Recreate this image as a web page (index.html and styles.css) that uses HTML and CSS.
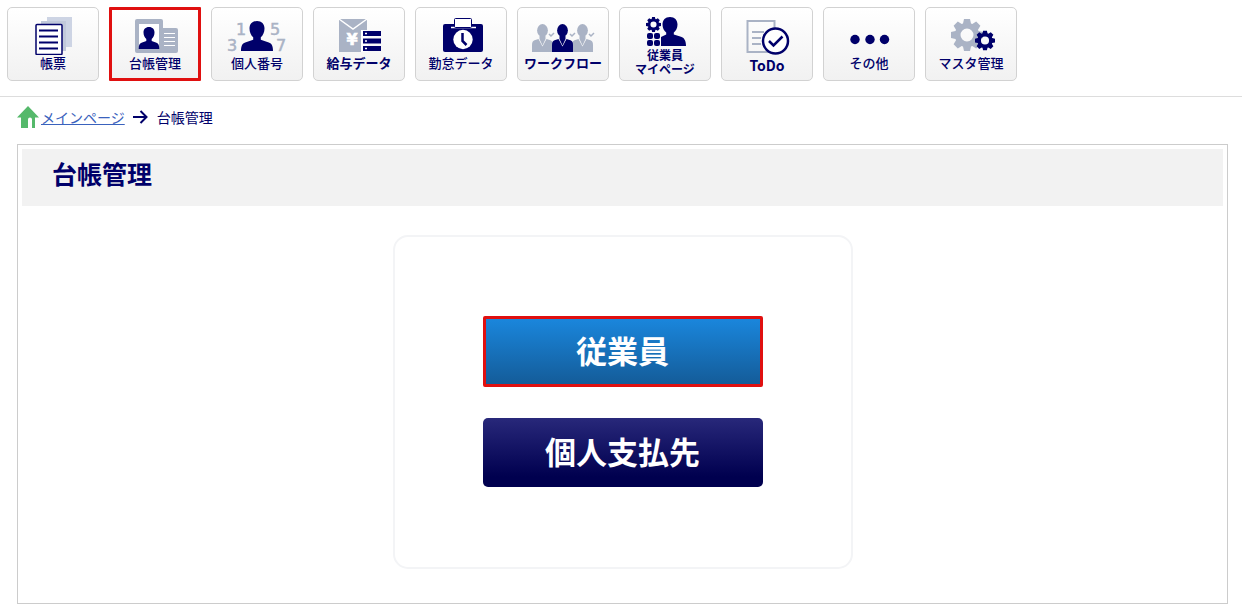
FILE: index.html
```html
<!DOCTYPE html>
<html lang="ja">
<head>
    <meta charset="UTF-8">
    <meta name="viewport" content="width=device-width, initial-scale=1.0">
    <title>台帳管理</title>
    <link rel="stylesheet" href="styles.css">
</head>
<body>
    <!-- shared shapes -->
    <svg class="defs" width="0" height="0" aria-hidden="true">
        <symbol id="gear" viewBox="-16 -16 32 32">
            <path fill-rule="evenodd" d="M-3 -16H3L4 -11.500L5.300 -11L9.200 -13.400L13.400 -9.200L11 -5.300L11.500 -4L16 -3V3L11.500 4L11 5.300L13.400 9.200L9.200 13.400L5.300 11L4 11.500L3 16H-3L-4 11.500L-5.300 11L-9.200 13.400L-13.400 9.200L-11 5.300L-11.500 4L-16 3V-3L-11.500 -4L-11 -5.300L-13.400 -9.200L-9.200 -13.400L-5.300 -11L-4 -11.500ZM-6.500 0a6.500 6.500 0 1 0 13 0a6.500 6.500 0 1 0 -13 0Z"/>
        </symbol>
        <symbol id="person" viewBox="0 0 32 30">
            <path d="M16 0c4.600 0 7.500 3 7.500 7.500c0 3.600-1.500 7-3.700 8.700v2.600l8 2.600c3 1 4.200 3.600 4.200 8.600H0c0-5 1.200-7.600 4.200-8.600l8-2.600v-2.600C10 14.500 8.500 11.100 8.500 7.500C8.500 3 11.400 0 16 0Z"/>
        </symbol>
        <symbol id="worker" viewBox="0 0 21 28">
            <ellipse cx="10.500" cy="6.500" rx="5.400" ry="6.500"/>
            <path d="M7.500 12h6v3l-3 6.500l-3-6.500Z"/>
            <path d="M6.500 15l4 7.500l4-7.500l4 1.200c2 .8 2.500 2.500 2.500 5V28H0v-6.800c0-2.500 .5-4.200 2.500-5Z"/>
        </symbol>
    </svg>

    <nav class="menu">
        <a class="menu-item" href="#">
            <svg viewBox="0 0 90 47">
                <path class="pale" d="M39 9h25v30h-7V16H39Z"/>
                <path class="mid" d="M33 13h25v30h-4V16H33Z"/>
                <rect class="line" x="28" y="16.500" width="26" height="30" rx="1" fill="#fff" stroke-width="1.500"/>
                <path class="line" d="M31 22.500h19M31 28.500h19M31 34.500h19M31 40.500h19" stroke-width="2"/>
            </svg>
            <span>帳票</span>
        </a>
        <a class="menu-item selected" href="#">
            <svg viewBox="0 0 90 47">
                <rect class="gray" x="25" y="11" width="28" height="34" rx="2"/>
                <rect class="gray" x="50" y="20" width="18" height="25" rx="2"/>
                <rect x="29" y="16" width="20" height="25" fill="#fff"/>
                <path class="navy" d="M39 19c3.500 0 5.500 2.300 5.500 5.500c0 2.800-1.200 5.300-2.800 6.500v2l4.800 1.800c2 .7 2.800 2.700 2.800 6.200H28.700c0-3.500 .8-5.500 2.800-6.200l4.800-1.800v-2c-1.600-1.200-2.800-3.700-2.800-6.500C33.500 21.300 35.500 19 39 19Z"/>
                <path d="M54 25.500h11M54 29.500h11M54 33.500h11M54 37.500h11" stroke="#fff"/>
            </svg>
            <span>台帳管理</span>
        </a>
        <a class="menu-item" href="#">
            <svg viewBox="0 0 90 47">
                <g class="digits">
                    <text x="29" y="27">1</text>
                    <text x="63" y="27">5</text>
                    <text x="20" y="43">3</text>
                    <text x="69" y="43">7</text>
                </g>
                <use class="navy" href="#person" x="29" y="13" width="32" height="30"/>
            </svg>
            <span>個人番号</span>
        </a>
        <a class="menu-item bold" href="#">
            <svg viewBox="0 0 90 47">
                <rect class="gray" x="25" y="11" width="28" height="33"/>
                <path d="M25 11l14 10l14-10" fill="none" stroke="#fff" stroke-width="1.500"/>
                <text class="yen" x="38" y="37">¥</text>
                <path d="M47 22h7v22h-7Z" fill="#fff"/>
                <path class="navy" d="M49 23h18v5H49ZM49 30.500h18v5H49ZM49 38h18v5H49Z"/>
                <path d="M51 25.500h2M51 33h2M51 40.500h2" stroke="#fff" stroke-width="1.500"/>
            </svg>
            <span>給与データ</span>
        </a>
        <a class="menu-item" href="#">
            <svg viewBox="0 0 90 47">
                <rect class="navy" x="27" y="16" width="40" height="28" rx="2"/>
                <path d="M35 19.500h25" stroke="#fff" stroke-width="1.500"/>
                <rect class="line" x="38.500" y="10.500" width="17" height="9" rx="1" fill="#fff"/>
                <circle cx="47" cy="31.500" r="9.700" fill="#fff"/>
                <path class="line" d="M46.500 25v8l4 4" stroke-width="2.500"/>
            </svg>
            <span>勤怠データ</span>
        </a>
        <a class="menu-item bold" href="#">
            <svg viewBox="0 0 90 47">
                <use class="gray" href="#worker" x="14" y="16" width="21" height="28"/>
                <use class="gray" href="#worker" x="54" y="16" width="21" height="28"/>
                <use class="navy" href="#worker" x="34" y="16" width="21" height="28"/>
                <path d="M31 26l2 2l3-3M52 26l2 2l3-3M71 26l2 2l3-3" fill="none" stroke="#aab3c5" stroke-width="1.500"/>
            </svg>
            <span>ワークフロー</span>
        </a>
        <a class="menu-item two-line" href="#">
            <svg viewBox="0 0 90 40">
                <use class="navy" href="#gear" x="26" y="9" width="15" height="15"/>
                <g class="navy">
                    <rect x="27" y="25" width="6" height="6" rx="2"/>
                    <rect x="34" y="25" width="6" height="6" rx="2"/>
                    <rect x="27" y="32" width="6" height="6" rx="2"/>
                    <rect x="34" y="32" width="6" height="6" rx="2"/>
                    <path d="M50 9c4.700 0 7.500 3 7.500 7.500c0 3.600-1.500 6.500-3.700 8v2l7.200 2.300c3 1 5 3.600 5 9.200H41V29l5.200-2.500v-2c-2.200-1.500-3.700-4.400-3.700-8C42.500 12 45.300 9 50 9Z"/>
                </g>
            </svg>
            <span>従業員<br>マイページ</span>
        </a>
        <a class="menu-item todo" href="#">
            <svg viewBox="0 0 90 47">
                <rect x="25.500" y="13" width="27" height="31" fill="none" stroke="#aab3c5" stroke-width="2"/>
                <path d="M30 24h12M30 30h9M30 36h9" stroke="#aab3c5" stroke-width="2"/>
                <circle class="line" cx="53.500" cy="33" r="12.500" fill="#fff" stroke-width="2.500"/>
                <path class="line" d="M47 33l4.500 4.500l9-9" stroke-width="2.500"/>
            </svg>
            <span>ToDo</span>
        </a>
        <a class="menu-item" href="#">
            <svg viewBox="0 0 90 47">
                <g class="navy">
                    <circle cx="31" cy="31.500" r="4.700"/>
                    <circle cx="46" cy="31.500" r="4.700"/>
                    <circle cx="60.500" cy="31.500" r="4.700"/>
                </g>
            </svg>
            <span>その他</span>
        </a>
        <a class="menu-item" href="#">
            <svg viewBox="0 0 90 47">
                <use class="gray" href="#gear" x="25" y="11" width="32" height="32"/>
                <use class="navy" href="#gear" x="49" y="22.500" width="20" height="20"/>
            </svg>
            <span>マスタ管理</span>
        </a>
    </nav>

    <div class="breadcrumb">
        <svg class="home" viewBox="0 0 22 22"><path d="M11 0L22 11.500H18V22H15V13.500a2 2 0 0 0-4 0V22H4V11.500H0Z"/></svg>
        <a href="#">メインページ</a>
        <svg class="arrow" viewBox="0 0 15 14"><path d="M0 7h13M7.500 1l6 6l-6 6"/></svg>
        <span>台帳管理</span>
    </div>

    <main class="panel">
        <h1>台帳管理</h1>
        <div class="choices">
            <button type="button" class="employee">従業員</button>
            <button type="button" class="payee">個人支払先</button>
        </div>
    </main>
</body>
</html>
```
FILE: styles.css
```css
* {
    box-sizing: border-box;
}

body {
    margin: 0;
    background: #fff;
    color: #00006a;
    font-family: "Noto Sans CJK JP", sans-serif;
    font-size: 14px;
}

.defs {
    position: absolute;
}

.menu {
    display: flex;
    flex-wrap: wrap;
    gap: 10px;
    padding: 7px 7px 15px;
    border-bottom: 1px solid #ddd;
}

.menu-item {
    display: flex;
    flex-direction: column;
    width: 92px;
    height: 74px;
    border: 1px solid #d2d2d2;
    border-radius: 5px;
    background: linear-gradient(#fff, #f1f1f1);
    color: #00006a;
    font-size: 13px;
    font-weight: 500;
    line-height: 16px;
    text-align: center;
    text-decoration: none;
    white-space: nowrap;
}

.menu-item svg {
    display: block;
    width: 100%;
}

.menu-item.selected {
    border-color: transparent;
    border-radius: 1px;
    outline: 3px solid #e01010;
    outline-offset: -3px;
}

.menu-item.bold,
.menu-item.todo,
.menu-item.two-line {
    font-weight: bold;
}

.menu-item.todo {
    font-size: 14px;
    line-height: 20px;
}

.menu-item.two-line {
    font-size: 12px;
    line-height: 14px;
}

.navy {
    fill: #00006a;
}

.gray {
    fill: #aab3c5;
}

.mid {
    fill: #c0c8da;
}

.pale {
    fill: #cdd4e4;
}

.line {
    stroke: #00006a;
}

path.line {
    fill: none;
}

.digits text,
.yen {
    font-family: "DejaVu Sans", sans-serif;
    font-size: 16px;
    text-anchor: middle;
    fill: #aab3c5;
    stroke: #aab3c5;
    stroke-width: 0.5;
}

.yen {
    fill: #fff;
    stroke: #fff;
}

.breadcrumb {
    display: flex;
    align-items: center;
    height: 47px;
    padding: 0 17px 7px;
    line-height: 20px;
}

.breadcrumb a {
    margin: 0 8px 0 2px;
    color: #3a62bd;
}

.home {
    width: 22px;
    height: 22px;
    fill: #55b96b;
}

.arrow {
    width: 15px;
    height: 14px;
    margin-right: 9px;
    fill: none;
    stroke: #00006a;
    stroke-width: 2;
}

.panel {
    margin: 0 14px 12px 17px;
    padding: 4px 4px 34px;
    border: 1px solid #ccc;
}

h1 {
    margin: 0 0 29px;
    padding: 6px 30px 15px;
    background: #f2f2f2;
    font-size: 25px;
    line-height: 36px;
}

.choices {
    display: flex;
    flex-direction: column;
    align-items: center;
    gap: 31px;
    max-width: 460px;
    margin: 0 auto;
    padding: 79px 20px 80px;
    border: 2px solid #f3f4f6;
    border-radius: 15px;
}

.choices button {
    width: 280px;
    max-width: 100%;
    padding: 0 0 3px;
    border: none;
    border-radius: 5px;
    color: #fff;
    font-family: inherit;
    font-size: 31px;
    font-weight: bold;
    line-height: 40px;
    cursor: pointer;
}

.choices .employee {
    height: 71px;
    border: 3px solid #e01010;
    border-radius: 2px;
    background: linear-gradient(#1a86dc, #145c99);
}

.choices .payee {
    height: 69px;
    background: linear-gradient(#28287a, #00004f 85%);
}
```
